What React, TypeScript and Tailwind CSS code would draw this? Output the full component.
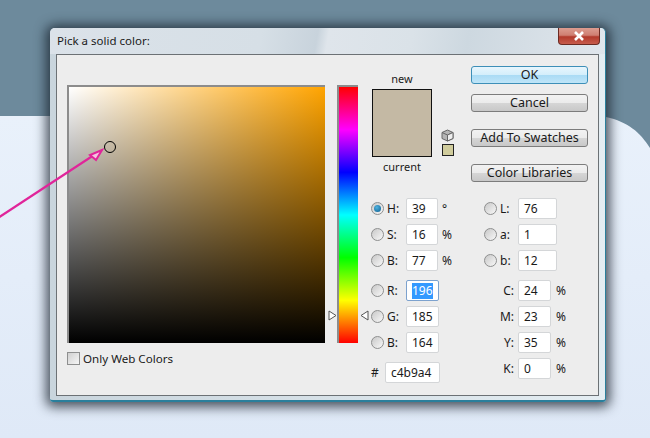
import React from 'react';

const HSB = [
  { id: 'H', value: '39', unit: '°', on: true },
  { id: 'S', value: '16', unit: '%' },
  { id: 'B', value: '77', unit: '%' },
];
const RGB = [
  { id: 'R', value: '196', selected: true },
  { id: 'G', value: '185' },
  { id: 'B', value: '164' },
];
const LAB = [
  { id: 'L', value: '76' },
  { id: 'a', value: '1' },
  { id: 'b', value: '12' },
];
const CMYK = [
  { id: 'C', value: '24' },
  { id: 'M', value: '23' },
  { id: 'Y', value: '35' },
  { id: 'K', value: '0' },
];

const Radio = ({ on }: { on?: boolean }) => (
  <span className="flex h-[13px] w-[13px] shrink-0 items-center justify-center rounded-full border border-[#8e8f8f] bg-[linear-gradient(135deg,#c8c8c8,#f8f8f8)]">
    {on && <span className="h-[7px] w-[7px] rounded-full bg-[radial-gradient(circle_at_40%_35%,#4fb3e0,#0b5c8f)]" />}
  </span>
);

const Field = ({ value, width, selected }: { value: string; width: string; selected?: boolean }) => (
  <div className={`flex h-[21px] items-center rounded-[2px] border bg-white pl-[5px] ${width} ${selected ? 'border-[#7da2ce]' : 'border-[#d4d6d8]'}`}>
    {selected ? <span className="bg-[#3399ff] py-[2px] text-white">{value}</span> : <span>{value}</span>}
  </div>
);

const Button = ({ label, primary }: { label: string; primary?: boolean }) => (
  <div
    className={`flex h-[18px] w-[117px] items-center justify-center rounded-[3px] border pt-[1px] text-[12.5px] ${
      primary
        ? 'border-[#3d8fb8] bg-[linear-gradient(to_bottom,#e8f6fd_0%,#d3eefb_50%,#a9dbf5_50%,#bfe5f8_100%)]'
        : 'border-[#7c7c7c] bg-[linear-gradient(to_bottom,#f2f2f2_0%,#ebebeb_50%,#d6d6d6_50%,#c8c8c8_100%)]'
    }`}
  >
    {label}
  </div>
);

export default function App() {
  return (
    <div className="relative flex h-[438px] w-[650px] flex-col overflow-hidden bg-[#e1ebf8] font-['Noto_Sans',sans-serif] text-[12px] leading-none text-[#1a1a1a]">
      <div className="h-[116px] bg-[#6d8a9c]" />
      <div className="flex-1 bg-[linear-gradient(to_bottom,#e9f1fb,#dfe9f7)]" />

      {/* corner of the page behind the dialog */}
      <svg className="absolute left-[600px] top-[110px]" width="50" height="45">
        <path d="M0 0H50V38C40 22 28 12 6 7H0Z" fill="#6d8a9c" />
      </svg>

      {/* dialog */}
      <div className="absolute left-[50px] top-[28px] flex h-[374px] w-[556px] flex-col rounded-t-[5px] rounded-b-[3px] border-b-2 border-r border-[#2a7f9c] bg-[linear-gradient(to_right,#c9d5dd,#e4edf2)] shadow-[0_1px_12px_4px_rgba(20,30,40,0.75)]">
        <div className="relative flex h-[26px] shrink-0 items-center rounded-t-[5px] bg-[linear-gradient(100deg,#dbe2e9_0%,#d6dfe6_38%,#c8d3dc_48%,#dfe5eb_50%,#dae2e8_65%,#cdd8e0_75%,#e0e6ec_100%)] pb-[1px] pl-[7px] text-[11.5px]">
          Pick a solid color:
          <div className="absolute right-[5px] top-0 flex h-[17px] w-[42px] items-center justify-center rounded-b-[4px] border border-t-0 border-[#6b2a22] bg-[linear-gradient(to_bottom,#dc9c90_0%,#cf7f72_45%,#b23a2c_55%,#c75c4c_100%)]">
            <svg width="12" height="10" viewBox="0 0 12 10">
              <path d="M2 1l8 8M10 1L2 9" stroke="#fff" strokeWidth="2.6" />
            </svg>
          </div>
        </div>

        <div className="mx-[6px] flex h-[342px] border border-[#6c7175] bg-[#ededed]">
          {/* colour field */}
          <div className="ml-[10px] mt-[30px] w-[258px]">
            <div className="relative h-[258px] w-[258px] border-l-2 border-t-2 border-[#8c8c8c] bg-[linear-gradient(to_top,#000,transparent),linear-gradient(to_right,#fff,#ffa400)]">
              <div className="absolute left-[35px] top-[54px] h-[12px] w-[12px] rounded-full border border-black" />
            </div>
            <div className="mt-[9px] flex items-center">
              <span className="h-[13px] w-[13px] border border-[#8e8f8f] bg-[linear-gradient(135deg,#d0d0d0,#f6f6f6)]" />
              <span className="ml-[3px] text-[11.6px]">Only Web Colors</span>
            </div>
          </div>

          {/* hue strip */}
          <div className="relative ml-[12px] mt-[30px] h-[258px] w-[21px] border-l-2 border-t-2 border-[#8c8c8c] bg-[linear-gradient(to_bottom,#f00,#f0f,#00f,#0ff,#0f0,#ff0,#f00)]">
            <svg className="absolute left-[-11px] top-[223px]" width="9" height="11">
              <path d="M1 1L8 5.5L1 10Z" fill="#fff" stroke="#555" />
            </svg>
            <svg className="absolute left-[21px] top-[223px]" width="9" height="11">
              <path d="M8 1L1 5.5L8 10Z" fill="#fff" stroke="#555" />
            </svg>
          </div>

          <div className="ml-[13px] mt-[11px] w-[218px]">
            <div className="flex h-[132px]">
              <div className="relative w-[100px] pl-[1px]">
                <div className="mt-[7px] w-[60px] text-center text-[11px]">new</div>
                <div className="mt-[5px] h-[68px] w-[60px] border-[1.5px] border-[#111] bg-[#c4b9a4]" />
                <div className="mt-[4px] w-[60px] text-center text-[11px]">current</div>
                <svg className="absolute left-[70px] top-[63px]" width="13" height="13" viewBox="0 0 13 13">
                  <path d="M6.5 1L12 3.5V9.5L6.5 12L1 9.5V3.5Z" fill="#b5b5b5" stroke="#666" />
                  <path d="M1 3.5L6.5 6L12 3.5M6.5 6V12" fill="none" stroke="#666" />
                  <path d="M6.5 6L12 3.5V9.5L6.5 12Z" fill="#eee" stroke="#666" />
                </svg>
                <div className="absolute left-[71px] top-[78px] h-[12px] w-[12px] border border-[#222] bg-[#d0cc9c]" />
              </div>
              <div className="flex flex-col">
                <Button label="OK" primary />
                <div className="mt-[10px]"><Button label="Cancel" /></div>
                <div className="mt-[17px]"><Button label="Add To Swatches" /></div>
                <div className="mt-[17px]"><Button label="Color Libraries" /></div>
              </div>
            </div>

            <div className="flex">
              <div className="flex w-[113px] flex-col gap-[5px]">
                {HSB.map((row) => (
                  <div key={row.id} className="flex h-[21px] items-center">
                    <Radio on={row.on} />
                    <span className="ml-[3px] w-[19px]">{row.id}:</span>
                    <Field value={row.value} width="w-[32px]" />
                    <span className="ml-[4px]">{row.unit}</span>
                  </div>
                ))}
                {RGB.map((row, i) => (
                  <div key={row.id} className={`flex h-[21px] items-center ${i === 0 ? 'mt-[4px]' : ''}`}>
                    <Radio />
                    <span className="ml-[3px] w-[19px]">{row.id}:</span>
                    <Field value={row.value} width="w-[33px]" selected={row.selected} />
                  </div>
                ))}
                <div className="mt-[4px] flex h-[21px] items-center">
                  <span className="w-[14px]">#</span>
                  <Field value="c4b9a4" width="w-[55px]" />
                </div>
              </div>

              <div className="flex flex-col gap-[5px]">
                {LAB.map((row) => (
                  <div key={row.id} className="flex h-[21px] items-center">
                    <Radio />
                    <span className="ml-[3px] w-[18px]">{row.id}:</span>
                    <Field value={row.value} width="w-[39px]" />
                  </div>
                ))}
                {CMYK.map((row, i) => (
                  <div key={row.id} className={`flex h-[21px] items-center ${i === 0 ? 'mt-[4px]' : ''}`}>
                    <span className="mr-[4px] w-[30px] text-right">{row.id}:</span>
                    <Field value={row.value} width="w-[33px]" />
                    <span className="ml-[5px]">%</span>
                  </div>
                ))}
              </div>
            </div>
          </div>
        </div>
      </div>

      {/* annotation arrow */}
      <svg className="absolute left-0 top-0" width="650" height="438">
        <path d="M-2 218L94 155" stroke="#e0259a" strokeWidth="2.2" fill="none" />
        <path d="M102 150L90 155L96 160Z" fill="#f5c4e0" stroke="#e0259a" strokeWidth="2" />
      </svg>
    </div>
  );
}
